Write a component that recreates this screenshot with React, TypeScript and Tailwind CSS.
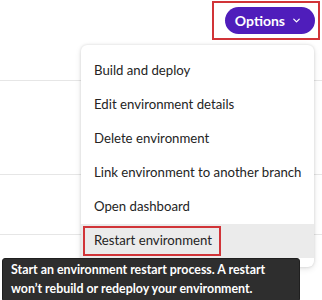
import { ChevronDown } from 'lucide-react'

const items = [
  'Build and deploy',
  'Edit environment details',
  'Delete environment',
  'Link environment to another branch',
  'Open dashboard',
]

export default function App() {
  return (
    <div className="relative w-[322px] h-[300px] overflow-hidden bg-white font-['Lato','Liberation_Sans',sans-serif] text-[#242424]">
      {/* background rows */}
      <div className="h-[81px] border-b border-[#e6e6e6] flex justify-end items-start pt-[1px] pr-[2px]">
        <div className="border-2 border-[#d13438] pl-[11px] pr-[3px] py-[4px]">
          <button className="flex items-center gap-[6px] h-[27px] rounded-full bg-[#4f1dbb] pl-[10px] pr-[13px] text-white text-[14px] font-bold">
            Options
            <ChevronDown size={11} strokeWidth={2.75} />
          </button>
        </div>
      </div>
      <div className="h-[94px] border-b border-[#e6e6e6]" />
      <div className="h-[60px] border-b border-[#e6e6e6]" />

      {/* menu */}
      <div className="absolute left-[81px] top-[45px] w-[233px] rounded-[6px] bg-white py-[9px] shadow-[0_0_3px_rgba(0,0,0,0.14),0_2px_6px_rgba(0,0,0,0.1)]">
        {items.map((t) => (
          <div key={t} className="h-[34px] flex items-center px-[13px] text-[13.2px] whitespace-nowrap">
            {t}
          </div>
        ))}
        <div className="h-[34px] flex items-center bg-[#ebebeb] pl-[2px]">
          <div className="border-2 border-[#d13438] h-[30px] flex items-center pl-[9px] pr-[7px] text-[13.2px]">
            Restart environment
          </div>
        </div>
      </div>

      {/* tooltip */}
      <div className="absolute left-[2px] top-[258px] w-[298px] rounded-[3px] bg-[#2e2e2e] border border-[#1f1f1f] px-[8px] pt-[1px] pb-[3px] text-white text-[12.4px] leading-[19px] font-bold whitespace-nowrap">
        Start an environment restart process. A restart
        <br />
        won’t rebuild or redeploy your environment.
      </div>
    </div>
  )
}
